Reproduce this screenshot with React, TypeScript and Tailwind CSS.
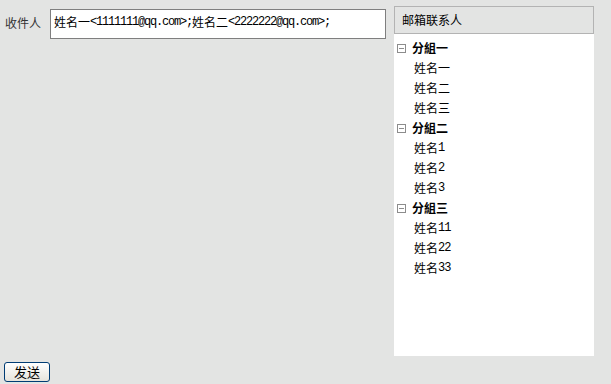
import React from "react";

const cjk = { fontFamily: '"Noto Sans CJK SC", "Noto Sans", sans-serif' };
const mono = { fontFamily: '"Liberation Mono", monospace', letterSpacing: "-1.2px" };

function Minus() {
  return (
    <svg width="9" height="9" viewBox="0 0 9 9" className="shrink-0">
      <rect x="0.5" y="0.5" width="8" height="8" fill="white" stroke="#8c8c8c" />
      <line x1="2" y1="4.5" x2="7" y2="4.5" stroke="#8c8c8c" />
    </svg>
  );
}

const groups = [
  { name: "分組一", items: [["姓名一", ""], ["姓名二", ""], ["姓名三", ""]] },
  { name: "分組二", items: [["姓名", "1"], ["姓名", "2"], ["姓名", "3"]] },
  { name: "分組三", items: [["姓名", "11"], ["姓名", "22"], ["姓名", "33"]] },
];

export default function App() {
  return (
    <div className="w-[611px] h-[384px] bg-[#e3e4e3] text-[12px] text-black overflow-hidden" style={cjk}>
      <div className="flex">
        <div className="flex items-start pt-[9px] pl-[5px] w-[389px]">
          <span className="mt-[4px] leading-[20px] text-[#333]">收件人</span>
          <div className="ml-[9px] w-[336px] h-[30px] bg-white border border-[#7f7f7f] flex items-center pl-[3px] pb-[4px] whitespace-nowrap leading-[16px]">
            <span>姓名一</span>
            <span style={mono}>&lt;1111111@qq.com&gt;;</span>
            <span>姓名二</span>
            <span style={mono}>&lt;2222222@qq.com&gt;;</span>
          </div>
        </div>
        <div className="mt-[6px] ml-[5px] w-[200px]">
          <div className="h-[28px] border border-[#b3b3b3] bg-[#e3e4e3] flex items-center pl-[7px] pb-[1px]">
            邮箱联系人
          </div>
          <div className="h-[322px] bg-white pt-[4px] pl-[3px]">
            {groups.map((g) => (
              <div key={g.name}>
                <div className="h-[20px] flex items-center">
                  <Minus />
                  <span className="ml-[6px] font-bold leading-[20px]">{g.name}</span>
                </div>
                {g.items.map(([a, b]) => (
                  <div key={a + b} className="h-[20px] flex items-center pl-[17px] leading-[20px]">
                    <span>{a}</span>
                    {b && <span style={{ fontFamily: '"Liberation Mono", monospace', letterSpacing: "-1px" }}>{b}</span>}
                  </div>
                ))}
              </div>
            ))}
          </div>
        </div>
      </div>
      <button className="ml-[4px] mt-[6px] w-[46px] h-[20px] border border-[#003c74] rounded-[3px] bg-gradient-to-b from-white to-[#e6e4dc] text-[13px] leading-[16px] flex items-center justify-center">
        发送
      </button>
    </div>
  );
}
